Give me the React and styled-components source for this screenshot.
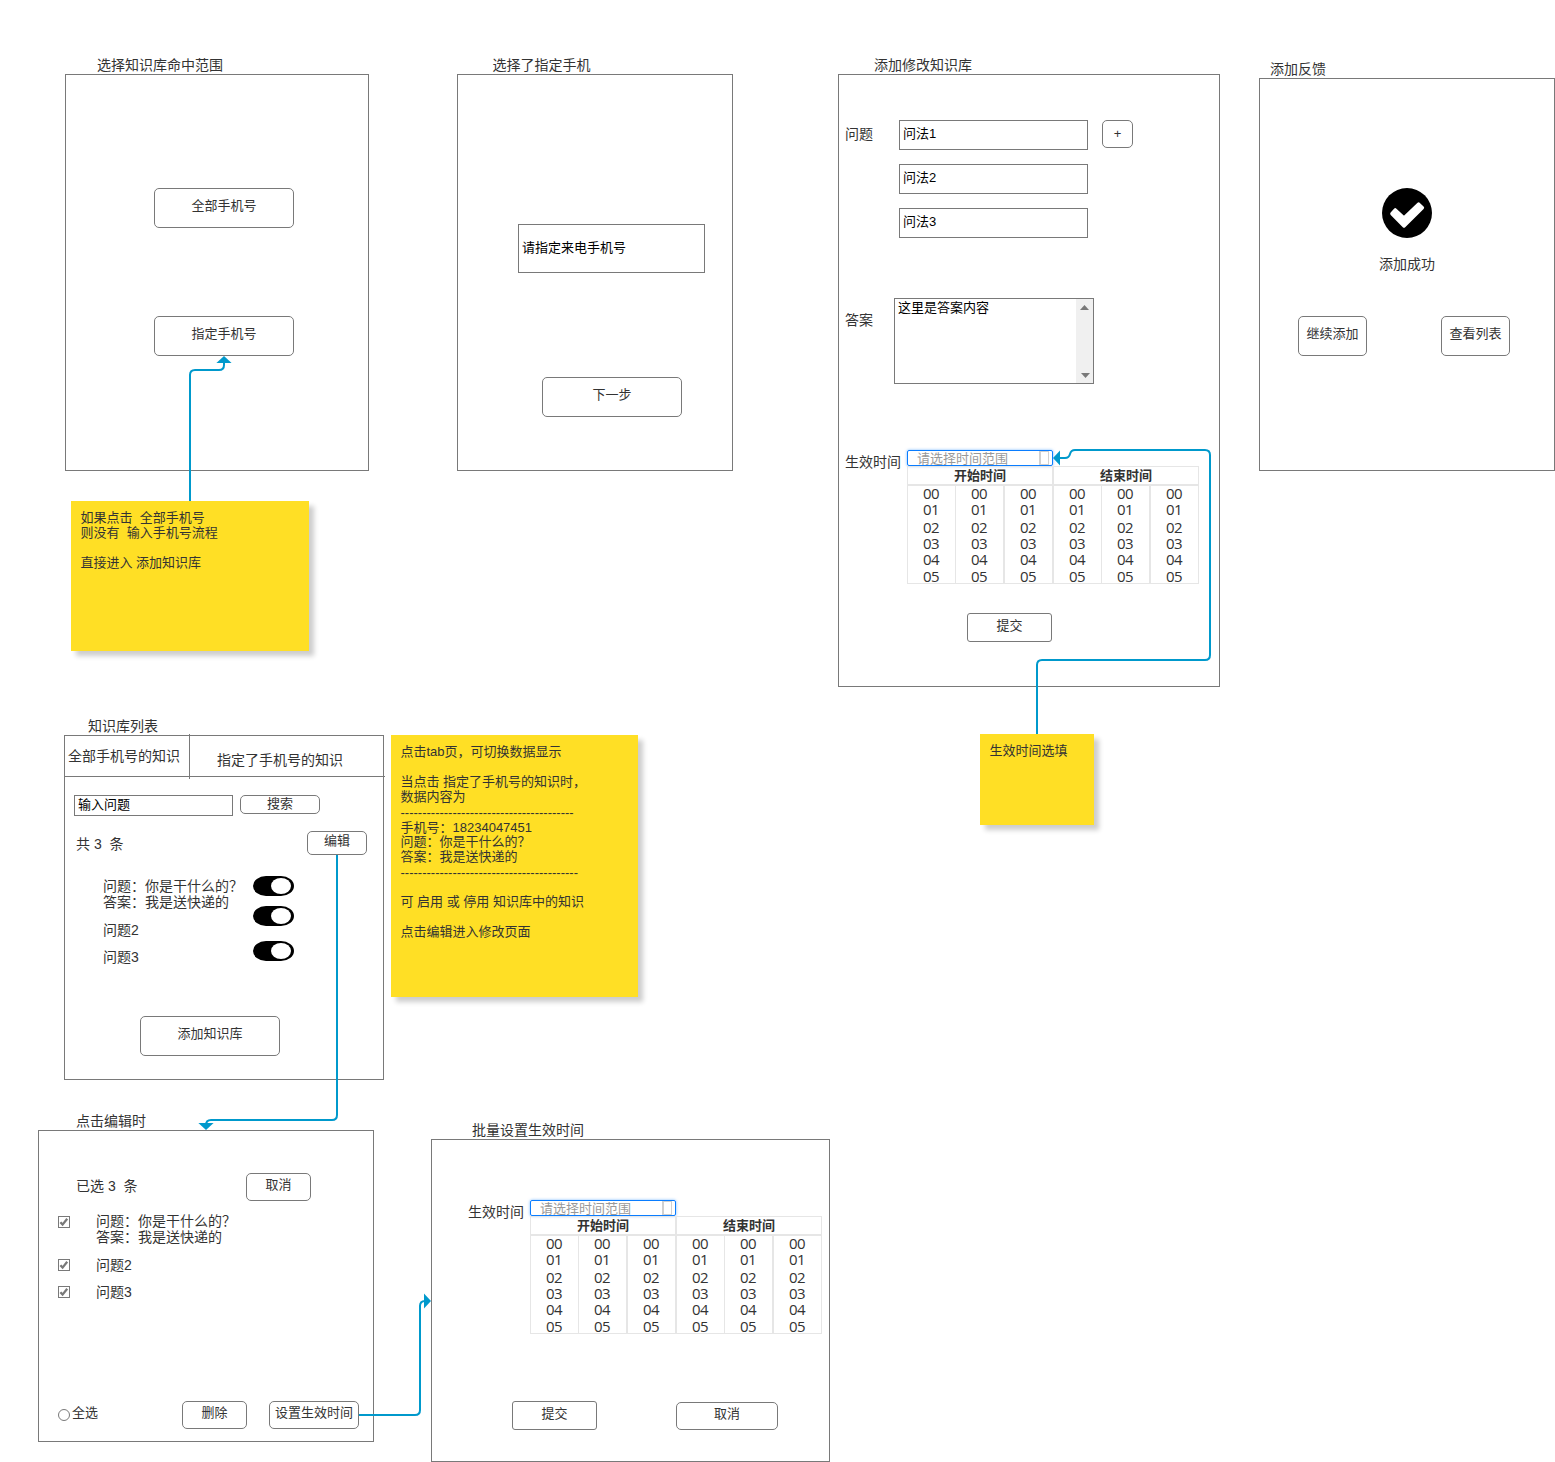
import React from "react";
import styled, { createGlobalStyle } from "styled-components";

const ink = "#333333";
const line = "#797979";
const accent = "#0099cc";

const GlobalStyle = createGlobalStyle`
  body { margin: 0; background: #fff; }
  * { box-sizing: border-box; }
`;

const Canvas = styled.main`
  position: relative;
  width: 1555px;
  height: 1462px;
  overflow: hidden;
  background: #fff;
  color: ${ink};
  font-family: "Liberation Sans", "Noto Sans CJK SC", sans-serif;
  font-size: 14px;
  line-height: 16px;
  white-space: pre;
`;

/* Artboards and notes are freely placed on the canvas. */
const BoardBox = styled.section`
  position: absolute;
  left: ${(p) => p.$x}px;
  top: ${(p) => p.$y - 17}px;
  width: ${(p) => p.$w}px;
  display: flex;
  flex-direction: column;
`;

const BoardTitle = styled.h2`
  margin: 0;
  height: 17px;
  padding-left: ${(p) => p.$indent}px;
  font-size: 14px;
  font-weight: 400;
  line-height: 17px;
`;

const Frame = styled.div`
  height: ${(p) => p.$h}px;
  border: 1px solid ${line};
  display: flex;
  flex-direction: column;
  align-items: flex-start;
`;

const Row = styled.div`
  display: flex;
  align-items: flex-start;
  margin-top: ${(p) => p.$mt || 0}px;
  margin-left: ${(p) => p.$ml || 0}px;
  gap: ${(p) => p.$gap || 0}px;
`;

const Column = styled(Row)`
  flex-direction: column;
`;

const Label = styled.span`
  display: block;
  width: ${(p) => (p.$w ? `${p.$w}px` : "auto")};
  margin-top: ${(p) => p.$mt || 0}px;
  margin-left: ${(p) => p.$ml || 0}px;
  flex: none;
`;

const Button = styled.button`
  display: flex;
  align-items: center;
  justify-content: center;
  flex: none;
  width: ${(p) => p.$w}px;
  height: ${(p) => p.$h}px;
  margin: ${(p) => p.$mt || 0}px 0 0;
  padding: 0 0 ${(p) => (p.$pb === undefined ? 5 : p.$pb)}px 0;
  border: 1px solid ${line};
  border-radius: ${(p) => p.$r || 5}px;
  background: #fff;
  color: ${ink};
  font: inherit;
  font-size: 13px;
  line-height: 15px;
  white-space: nowrap;
`;

const Field = styled.div`
  display: flex;
  align-items: center;
  width: ${(p) => p.$w}px;
  height: ${(p) => p.$h}px;
  padding: 0 3px 3px;
  border: 1px solid ${line};
  color: #000;
  font-size: 13px;
  line-height: 15px;
`;

const TextArea = styled.div`
  display: flex;
  justify-content: space-between;
  width: 200px;
  height: 86px;
  border: 1px solid ${line};
  color: #000;
  font-size: 13px;
  line-height: 15px;
`;

const TextAreaValue = styled.span`
  padding: 1px 3px;
`;

const ScrollTrack = styled.div`
  display: flex;
  flex-direction: column;
  justify-content: space-between;
  width: 17px;
  padding: 6px 3px 5px 4px;
  background: #f0f0f0;
`;

/* Time range picker */
const PickerBox = styled.div`
  width: 292px;
`;

const PickerInput = styled.div`
  display: flex;
  justify-content: space-between;
  width: 146px;
  height: 16px;
  padding: 0 3px 0 9px;
  border: 1px solid #0a7dff;
  border-radius: 2px;
  box-shadow: 0 0 3px rgba(10, 125, 255, 0.55);
  color: #999;
  font-size: 13px;
  line-height: 15px;
`;

const PickerGlyph = styled.i`
  width: 10px;
  height: 14px;
  border: 1px solid #d0d0d0;
  border-width: 1px 1px 1px 2px;
`;

const PickerHeads = styled.div`
  display: grid;
  grid-template-columns: 146px 146px;
`;

const PickerHead = styled.div`
  height: 19px;
  border: 1px solid #e6e6e6;
  font-size: 13px;
  font-weight: 700;
  line-height: 17px;
  text-align: center;
`;

const PickerCols = styled.div`
  display: flex;
`;

const PickerCol = styled.div`
  width: 49px;
  height: 99px;
  margin-left: ${(p) => (p.$joined ? -1 : 0)}px;
  padding-right: 1px;
  border: 1px solid #e6e6e6;
  font-family: "Open Sans", "Noto Sans", sans-serif;
  font-size: 15px;
  letter-spacing: -0.5px;
  line-height: 14px;
  text-align: center;
`;

const PickerCell = styled.div`
  height: 16px;
  &:nth-child(3) { margin-top: 2px; }
  &:nth-child(6) { margin-top: 1px; }
`;

/* Tabs */
const Tabs = styled.div`
  display: flex;
  width: 320px;
  height: 41px;
  border-bottom: 1px solid ${line};
`;

const Tab = styled.div`
  width: ${(p) => p.$w}px;
  height: ${(p) => (p.$divided ? 45 : 40)}px;
  margin-top: ${(p) => (p.$divided ? -2 : 0)}px;
  padding: ${(p) => p.$pt}px 0 0 ${(p) => p.$pl}px;
  border-right: ${(p) => (p.$divided ? `1px solid ${line}` : "0")};
`;

const Toggle = styled.div`
  display: flex;
  align-items: center;
  justify-content: flex-end;
  width: 41px;
  height: 20px;
  margin-top: ${(p) => p.$mt || 0}px;
  padding: 0 3px 0 0;
  border-radius: 13px / 10px;
  background: #000;
  &::after {
    content: "";
    width: 20px;
    height: 16px;
    border-radius: 50%;
    background: #fff;
  }
`;

const CheckSquare = styled.span`
  display: flex;
  width: 12px;
  height: 12px;
  margin-top: ${(p) => p.$mt}px;
  border: 1px solid ${line};
`;

const Radio = styled.span`
  width: 12px;
  height: 12px;
  margin-top: 7.5px;
  border: 1px solid ${line};
  border-radius: 50%;
`;

const RadioLabel = styled.span`
  width: 112px;
  margin-top: 4px;
  padding-left: 2px;
  font-size: 13px;
`;

const Note = styled.aside`
  position: absolute;
  left: ${(p) => p.$x}px;
  top: ${(p) => p.$y}px;
  width: ${(p) => p.$w}px;
  height: ${(p) => p.$h}px;
  padding: 9px 10px 9px 9.5px;
  background: #ffdf25;
  box-shadow: 5px 5px 5px rgba(0, 0, 0, 0.2);
  font-size: 13px;
  line-height: 15px;
`;

const NoteLine = styled.div`
  height: 15px;
  padding-top: ${(p) => p.$low || 0}px;
`;

const Links = styled.svg`
  position: absolute;
  left: 0;
  top: 0;
  pointer-events: none;
`;

function Board({ x, y, w, h, title, indent, children }) {
  return (
    <BoardBox $x={x} $y={y} $w={w}>
      <BoardTitle $indent={indent}>{title}</BoardTitle>
      <Frame $h={h}>{children}</Frame>
    </BoardBox>
  );
}

const hours = ["00", "01", "02", "03", "04", "05"];

function TimePicker() {
  return (
    <PickerBox>
      <PickerInput>
        请选择时间范围
        <PickerGlyph />
      </PickerInput>
      <PickerHeads>
        <PickerHead>开始时间</PickerHead>
        <PickerHead>结束时间</PickerHead>
      </PickerHeads>
      <PickerCols>
        {hours.map((_, col) => (
          <PickerCol key={col} $joined={col % 3 === 1}>
            {hours.map((h) => (
              <PickerCell key={h}>{h}</PickerCell>
            ))}
          </PickerCol>
        ))}
      </PickerCols>
    </PickerBox>
  );
}

function CheckBox({ mt }) {
  return (
    <CheckSquare $mt={mt}>
      <svg width="10" height="10" viewBox="0 0 10 10">
        <path d="M1.4 5.2 L3.6 7.6 L8.2 1.8" fill="none" stroke="#797979" strokeWidth="2.3" />
      </svg>
    </CheckSquare>
  );
}

function SuccessIcon() {
  return (
    <svg width="50" height="50" viewBox="0 0 50 50">
      <circle cx="25" cy="25" r="25" fill="#000" />
      <path
        d="M13.3 21.9 L22 30 L36.7 16.1 L40.4 19.7 L22 38 L9.9 25.7 Z"
        fill="#fff"
        stroke="#fff"
        strokeWidth="3.4"
        strokeLinejoin="round"
      />
    </svg>
  );
}

const noteLines = [
  { text: "点击tab页，可切换数据显示" },
  { text: "" },
  { text: "当点击 指定了手机号的知识时，" },
  { text: "数据内容为" },
  { text: "-".repeat(40), low: 1 },
  { text: "手机号：18234047451", low: 1 },
  { text: "问题：你是干什么的？" },
  { text: "答案：我是送快递的" },
  { text: "-".repeat(41), low: 1 },
  { text: "" },
  { text: "可 启用 或 停用 知识库中的知识" },
  { text: "" },
  { text: "点击编辑进入修改页面" },
];

export default function App() {
  return (
    <>
      <GlobalStyle />
      <Canvas>
        <Board x={65} y={74} w={304} h={397} title="选择知识库命中范围" indent={32}>
          <Column $mt={113} $ml={88} $gap={88}>
            <Button $w={140} $h={40}>全部手机号</Button>
            <Button $w={140} $h={40}>指定手机号</Button>
          </Column>
        </Board>

        <Board x={457} y={74} w={276} h={397} title="选择了指定手机" indent={35.5}>
          <Row $mt={149} $ml={60}>
            <Field $w={187} $h={49}>请指定来电手机号</Field>
          </Row>
          <Row $mt={104} $ml={84}>
            <Button $w={140} $h={40}>下一步</Button>
          </Row>
        </Board>

        <Board x={838} y={74} w={382} h={613} title="添加修改知识库" indent={36}>
          <Row $mt={45} $ml={6}>
            <Label $w={54} $mt={6}>问题</Label>
            <Column $gap={14}>
              <Field $w={189} $h={30}>问法1</Field>
              <Field $w={189} $h={30}>问法2</Field>
              <Field $w={189} $h={30}>问法3</Field>
            </Column>
            <Row $ml={14}>
              <Button $w={31} $h={28} $pb={1}>+</Button>
            </Row>
          </Row>
          <Row $mt={60} $ml={6}>
            <Label $w={49} $mt={14}>答案</Label>
            <TextArea>
              <TextAreaValue>这里是答案内容</TextAreaValue>
              <ScrollTrack>
                <svg width="9" height="5" viewBox="0 0 9 5">
                  <path d="M0 5 L4.5 0 L9 5 Z" fill="#797979" />
                </svg>
                <svg width="10" height="5" viewBox="0 0 10 5">
                  <path d="M1 0 L5.5 5 L10 0 Z" fill="#797979" />
                </svg>
              </ScrollTrack>
            </TextArea>
          </Row>
          <Row $mt={66} $ml={6}>
            <Label $w={62} $mt={4}>生效时间</Label>
            <TimePicker />
          </Row>
          <Row $mt={29} $ml={128}>
            <Button $w={85} $h={29} $r={3}>提交</Button>
          </Row>
        </Board>

        <Board x={1259} y={78} w={296} h={393} title="添加反馈" indent={11}>
          <Row $mt={109} $ml={122}>
            <SuccessIcon />
          </Row>
          <Label $mt={18} $ml={119}>添加成功</Label>
          <Row $mt={44} $ml={38} $gap={74}>
            <Button $w={69} $h={40}>继续添加</Button>
            <Button $w={69} $h={40}>查看列表</Button>
          </Row>
        </Board>

        <Board x={64} y={735} w={320} h={345} title="知识库列表" indent={24}>
          <Tabs>
            <Tab $w={125} $divided $pt={14} $pl={3}>全部手机号的知识</Tab>
            <Tab $w={195} $pt={16} $pl={27}>指定了手机号的知识</Tab>
          </Tabs>
          <Row $mt={18} $ml={9} $gap={7}>
            <Field $w={159} $h={21}>输入问题</Field>
            <Button $w={80} $h={19} $pb={3}>搜索</Button>
          </Row>
          <Row $mt={15} $ml={11}>
            <Label $w={231} $mt={5}>{"共 3  条"}</Label>
            <Button $w={60} $h={24}>编辑</Button>
          </Row>
          <Row $mt={21} $ml={38}>
            <Column>
              <Label $w={150} $mt={2}>问题：你是干什么的？</Label>
              <Label>答案：我是送快递的</Label>
              <Label $mt={12}>问题2</Label>
              <Label $mt={11}>问题3</Label>
            </Column>
            <Column>
              <Toggle />
              <Toggle $mt={10} />
              <Toggle $mt={15} />
            </Column>
          </Row>
          <Row $mt={51} $ml={75}>
            <Button $w={140} $h={40}>添加知识库</Button>
          </Row>
        </Board>

        <Board x={38} y={1130} w={336} h={312} title="点击编辑时" indent={38}>
          <Row $mt={42} $ml={37}>
            <Label $w={170} $mt={5}>{"已选 3  条"}</Label>
            <Button $w={65} $h={28}>取消</Button>
          </Row>
          <Row $mt={12} $ml={19} $gap={26}>
            <CheckBox mt={3} />
            <Label>{"问题：你是干什么的？\n答案：我是送快递的"}</Label>
          </Row>
          <Row $mt={12} $ml={19} $gap={26}>
            <CheckBox mt={2} />
            <Label>问题2</Label>
          </Row>
          <Row $mt={11} $ml={19} $gap={26}>
            <CheckBox mt={2} />
            <Label>问题3</Label>
          </Row>
          <Row $mt={101} $ml={19}>
            <Radio />
            <RadioLabel>全选</RadioLabel>
            <Row $gap={22}>
              <Button $w={65} $h={28}>删除</Button>
              <Button $w={90} $h={28}>设置生效时间</Button>
            </Row>
          </Row>
        </Board>

        <Board x={431} y={1139} w={399} h={323} title="批量设置生效时间" indent={41}>
          <Row $mt={60} $ml={36}>
            <Label $w={62} $mt={4}>生效时间</Label>
            <TimePicker />
          </Row>
          <Row $mt={67} $ml={80} $gap={79}>
            <Button $w={85} $h={29} $r={3}>提交</Button>
            <Button $w={102} $h={28} $mt={1}>取消</Button>
          </Row>
        </Board>

        <Note $x={71} $y={501} $w={238} $h={150}>
          <NoteLine>{"如果点击  全部手机号"}</NoteLine>
          <NoteLine>{"则没有  输入手机号流程"}</NoteLine>
          <NoteLine />
          <NoteLine>直接进入 添加知识库</NoteLine>
        </Note>
        <Note $x={391} $y={735} $w={247} $h={262}>
          {noteLines.map(({ text, low }, i) => (
            <NoteLine key={i} $low={low}>{text}</NoteLine>
          ))}
        </Note>
        <Note $x={980} $y={734} $w={114} $h={91}>
          <NoteLine>生效时间选填</NoteLine>
        </Note>

        <Links width="1555" height="1462" viewBox="0 0 1555 1462">
          <g fill="none" stroke={accent} strokeWidth="2">
            <path d="M190 501 V375 Q190 370 195 370 H219 Q224 370 224 365 V362" />
            <path d="M337 855 V1115 Q337 1120 332 1120 H211 Q206 1120 206 1125" />
            <path d="M359 1415 H415 Q420 1415 420 1410 V1306 Q420 1301 425 1301" />
            <path d="M1037 734 V665 Q1037 660 1042 660 H1205 Q1210 660 1210 655 V455 Q1210 450 1205 450 H1075 Q1071 450 1070 454 Q1069 458 1065 458 H1059" />
          </g>
          <g fill={accent}>
            <path d="M224 356 L231.6 363 H216.4 Z" />
            <path d="M206 1130 L213.6 1123 H198.4 Z" />
            <path d="M431 1301 L424 1308.6 V1293.4 Z" />
            <path d="M1053 458 L1060 465.6 V450.4 Z" />
          </g>
        </Links>
      </Canvas>
    </>
  );
}
